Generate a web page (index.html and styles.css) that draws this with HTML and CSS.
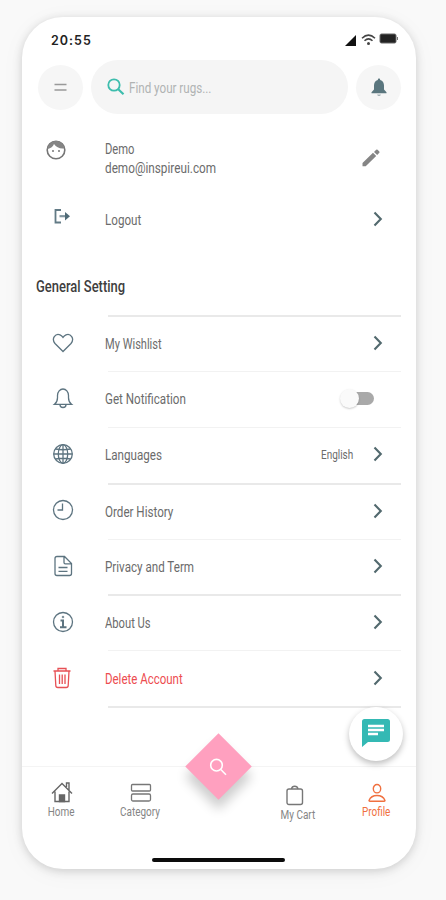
FILE: index.html
```html
<!DOCTYPE html>
<html lang="en">
<head>
<meta charset="utf-8">
<title>Profile</title>
<link rel="stylesheet" href="styles.css">
</head>
<body>
<svg width="0" height="0" class="defs"><symbol id="chev" viewBox="0 0 10 16"><path d="M1.500 1.500 7.800 8 1.500 14.500" fill="none" stroke="#52696e" stroke-width="2.100"/></symbol></svg>
<main class="phone">
  <div class="status">
    <span class="time">20:55</span>
    <svg width="54" height="14" viewBox="0 0 54 14"><path d="M0 13 11 2V13Z" fill="#111"/><g fill="none" stroke="#444" stroke-width="1.500"><path d="M17 5.200Q23.500-1 30 5.200"/><path d="M19.500 7.800Q23.500 4 27.500 7.800"/></g><circle cx="23.500" cy="10.500" r="1.500" fill="#444"/><rect x="35" y="1" width="16" height="9" rx="1.500" fill="#222" stroke="#666"/><path d="M52.500 4v3" stroke="#777"/></svg>
  </div>
  <header class="top">
    <button class="round"><svg width="13" height="9" viewBox="0 0 13 9"><path d="M.5 1.500h12M.5 7h12" stroke="#999" stroke-width="1.600"/></svg></button>
    <div class="search">
      <svg width="18" height="18" viewBox="0 0 18 18" fill="none" stroke="#3dbdad" stroke-width="1.800"><circle cx="7" cy="7" r="5.700"/><path d="m11 11 5.500 5.200" stroke-width="2.200"/></svg>
      <span class="t hint">Find your rugs...</span>
    </div>
    <button class="round"><svg width="16" height="19" viewBox="0 0 16 19" fill="#5a767e"><path d="M8 .5c.9 0 1.200.7 1.200 1.500 2.600.8 3.800 2.900 3.800 5.500v4l2.500 2.700v1H.5v-1L3 11.500v-4C3 4.900 4.200 2.800 6.800 2 6.800 1.200 7.100.5 8 .5z"/><path d="M6 16.500h4L9 18H7z" fill="#a5b2b6"/></svg></button>
  </header>

  <section class="user">
    <svg class="face" width="20" height="20" viewBox="0 0 20 20"><circle cx="10" cy="10" r="8.800" fill="none" stroke="#757575" stroke-width="1.600"/><path d="M1.500 9C5 8.500 7 6.500 8 4c2.500 3.500 6 5 10.500 4.300C17.500 3.500 14 1 10 1S2 4 1.500 9z" fill="#858585"/><circle cx="7" cy="11" r="1" fill="#777"/><circle cx="13" cy="11" r="1" fill="#777"/></svg>
    <div class="who"><span class="t name">Demo</span><span class="t mail">demo@inspireui.com</span></div>
    <svg class="pen" width="18" height="18" viewBox="0 0 18 18" fill="#858585"><path d="M.5 14 11 3.800l3.200 3.200L3.700 17.300H.5zM12 2.900 14.200.7q.7-.6 1.400 0l1.700 1.700q.6.700 0 1.400L15.200 6z"/></svg>
  </section>
  <section class="logout">
    <svg class="out" width="17" height="15" viewBox="0 0 17 15"><path d="M8 1H2.500v12.500H8" fill="none" stroke="#627a85" stroke-width="1.800"/><path d="M6.500 7.200H13" stroke="#8296a0" stroke-width="2.200"/><path d="M12 3 17 7.200 12 11.500z" fill="#506b77"/></svg>
    <span class="t out-label">Logout</span>
    <svg class="chev" width="10" height="16"><use href="#chev"/></svg>
  </section>

  <h2><span class="t heading">General Setting</span></h2>

  <ul class="list">
    <li class="row"><svg class="ico" viewBox="0 0 22 22"><path d="M11 19.500 3 11.500C-1 6.500 3.500 1 8 2.800c1.500.6 2.400 1.500 3 2.500.6-1 1.500-1.900 3-2.500 4.500-1.800 9 3.700 5 8.700z"/></svg><div class="body"><span class="t wish">My Wishlist</span><svg class="chev" width="10" height="16"><use href="#chev"/></svg></div></li>
    <li class="row thin"><svg class="ico" viewBox="0 0 22 22"><path d="M2.500 17.300c2-1.500 3-3.500 3-6.500V8.500C5.500 5 8 2 11 2s5.500 3 5.500 6.500v2.300c0 3 1 5 3 6.500zM8 17.800c0 1.500 1.300 2.700 3 2.700s3-1.200 3-2.700"/></svg><div class="body"><span class="t notif">Get Notification</span><i class="switch"></i></div></li>
    <li class="row thin"><svg class="ico globe" viewBox="0 0 22 22"><circle cx="11" cy="11" r="9.300"/><ellipse cx="11" cy="11" rx="4.700" ry="9.300"/><path d="M11 1.700v18.600M1.700 11h18.600M3.500 6q7.500 1.500 15 0M3.500 16q7.500-1.500 15 0"/></svg><div class="body"><span class="t lang">Languages</span><span class="t english">English</span><svg class="chev" width="10" height="16"><use href="#chev"/></svg></div></li>
    <li class="row"><svg class="ico" viewBox="0 0 22 22"><circle cx="11" cy="11" r="9.500"/><path d="M10.500 4.500V11H5.500"/></svg><div class="body"><span class="t order">Order History</span><svg class="chev" width="10" height="16"><use href="#chev"/></svg></div></li>
    <li class="row thin"><svg class="ico" viewBox="0 0 22 22"><path d="M3 3.500Q3 1.500 5 1.500h7.500L19.500 8.500v10q0 2-2 2H5q-2 0-2-2zM12 1.500V7.500q0 1.300 1.300 1.300h6M6.500 12.500h9M6.500 16.300h9"/></svg><div class="body"><span class="t privacy">Privacy and Term</span><svg class="chev" width="10" height="16"><use href="#chev"/></svg></div></li>
    <li class="row"><svg class="ico" viewBox="0 0 22 22"><circle cx="11" cy="11" r="9.500"/><path d="M8.500 9.500H11V16M8 16.300h6.500" stroke-width="2"/><circle cx="11" cy="6" r=".8" stroke-width="1"/></svg><div class="body"><span class="t about">About Us</span><svg class="chev" width="10" height="16"><use href="#chev"/></svg></div></li>
    <li class="row thin danger"><svg class="ico" viewBox="0 0 22 22"><path d="M1.500 4h17M6 4V1.500h8V4M3 4l.8 14.500q.1 2 2 2h8.400q1.900 0 2-2L17 4M7.500 7.500v9.500M10.200 7.500v9.500M13 7.500v9.500"/></svg><div class="body"><span class="t delete">Delete Account</span><svg class="chev" width="10" height="16"><use href="#chev"/></svg></div></li>
  </ul>

  <nav class="tabs">
    <a class="tab"><svg width="22" height="21" viewBox="0 0 22 21" fill="none" stroke="#666" stroke-width="1.400"><path d="M1 11.500 11 1.500l10 10M4 9.500V19.500h14V9.500M15.500 5V1H18V8"/><path d="M8.500 13h5v6.500h-5z" fill="#666"/></svg><span class="t home">Home</span></a>
    <a class="tab"><svg width="22" height="21" viewBox="0 0 22 21" fill="none" stroke="#777" stroke-width="1.300"><rect x="1.500" y="2.500" width="19" height="6.500" rx="1"/><rect x="1.500" y="12" width="19" height="7" rx="1.500"/></svg><span class="t cat">Category</span></a>
    <a class="tab cart-tab"><svg width="18" height="21" viewBox="0 0 18 21" fill="none" stroke="#777" stroke-width="1.400"><rect x="1" y="4" width="15.500" height="15.500" rx="2"/><path d="M5.500 4Q6 1.300 8.700 1.300T12 4"/></svg><span class="t cart">My Cart</span></a>
    <a class="tab active"><svg width="18" height="21" viewBox="0 0 18 21" fill="none" stroke="#f0703f" stroke-width="1.400"><ellipse cx="9" cy="6.700" rx="3.700" ry="4.200"/><path d="M1 18.500q2-5 8-5t8 5q0 .7-.8.700H1.800q-.8 0-.8-.7z"/></svg><span class="t profile">Profile</span></a>
  </nav>
  <div class="bar"></div>
  <div class="fab"><svg width="20" height="20" viewBox="0 0 20 20" fill="none" stroke="#fff" stroke-width="1.600"><circle cx="8" cy="8" r="5.800"/><path d="m12.300 12.300 5.200 5.200"/></svg></div>
  <div class="chat"><svg width="30" height="30" viewBox="0 0 30 30"><path d="M3.500 1h23q2.500 0 2.500 2.500v18q0 2.500-2.500 2.500H7L1 29V3.500Q1 1 3.500 1z" fill="#34b9b4"/><path d="M7 8h16M7 12h16M7 16h10" stroke="#fff" stroke-width="2.300"/></svg></div>
</main>
</body>
</html>
```
FILE: styles.css
```css
* { box-sizing: border-box; }
body { margin: 0; height: 900px; background: #f9f9f9; font-family: Roboto, "Liberation Sans", sans-serif; overflow: hidden; }
.defs { position: absolute; }
.phone { position: relative; width: 394px; height: 852px; margin: 17px 0 0 22px; background: #fff; border-radius: 41px; box-shadow: 0 2px 10px rgba(0,0,0,.16), 0 4px 26px rgba(0,0,0,.04); }
/* labels are set narrow to imitate a condensed face */
.t { display: block; white-space: nowrap; transform: scaleX(.83); transform-origin: left center; font-size: 14px; line-height: 18px; color: #6b6b6b; }
.status { height: 43px; display: flex; justify-content: space-between; padding: 16px 17px 0 29px; }
.time { font: 600 12.500px/16px Inter, sans-serif; letter-spacing: 1px; color: #222; }
.top { display: flex; align-items: center; gap: 8px; height: 54px; padding: 0 15px 0 16px; }
.round { width: 45px; height: 45px; border: 0; border-radius: 50%; background: #f6f6f6; padding: 0; display: grid; place-items: center; }
.search { flex: 1; height: 54px; border-radius: 27px; background: #f5f5f5; display: flex; align-items: center; padding-left: 16px; gap: 4px; }
.hint { color: #b0b3b3; padding-top: 2px; }
.user { height: 70px; display: flex; align-items: flex-start; padding: 26px 35px 0 24px; }
.who { width: 276px; margin-left: 39px; }
.who .t { line-height: 19px; }
.name { transform: scaleX(.8); }
.mail { transform: scaleX(.84); }
.wish { transform: scaleX(.79); }
.about { transform: scaleX(.8); }
.delete { transform: scaleX(.82); }
.pen { margin: 9px 0 0 -19px; }
.logout { height: 71px; display: flex; align-items: center; padding: 0 33px 0 31px; }
.out { margin-top: -6px; }
.chev { margin-top: -2px; }
.out-label { margin-left: 35px; flex: 1; }
h2 { margin: 0; height: 60px; padding: 21px 0 0 14px; }
.heading { font-weight: 500; font-size: 16px; line-height: 22px; color: #3e3e3e; transform: scaleX(.81); }
.list { list-style: none; margin: 0; padding: 0; }
.row { display: flex; height: 55.900px; }
.ico { width: 22px; height: 22px; margin: 16.500px 0 0 30px; fill: none; stroke: #5d7480; stroke-width: 1.300; }
.danger .ico { stroke: #e75055; }
.danger .t { color: #ed4c50; }
.body { flex: 1; margin: 0 15px 0 34px; padding-right: 18px; border-top: 2px solid #e9e9e9; display: flex; align-items: center; justify-content: space-between; }
.body > .t:first-child { margin-left: -3px; flex: 1; }
.thin .body { border-top: 1px solid #f2f2f2; }
.switch { position: relative; width: 31px; height: 13px; border-radius: 7px; background: #a9a9a9; margin: -1px 9px 0 0; }
.switch::before { content: ""; position: absolute; left: -3px; top: -3px; width: 19px; height: 19px; border-radius: 50%; background: #fafafa; box-shadow: 0 1px 2px rgba(0,0,0,.2); }
.english { font-size: 12px; width: 52px; }
.list::after { content: ""; display: block; height: 2px; background: #e9e9e9; margin: 0 15px 0 86px; }
.tabs { margin-top: 58px; border-top: 1px solid #f4f4f4; display: grid; grid-template-columns: 79px 79px 1fr 79px; height: 84px; padding-top: 15px; }
.tab { display: flex; flex-direction: column; align-items: center; gap: 1px; }
.tab .t { font-size: 12px; line-height: 16px; transform-origin: center; color: #858585; }
.cart-tab { padding: 3px 0 0 78px; }
.cart-tab svg { margin-right: 5px; }
.tab.active .t { color: #f0703f; }
.bar { position: absolute; left: 130px; top: 841px; width: 133px; height: 4px; border-radius: 2px; background: #0c0c0c; }
.fab { position: absolute; left: 173px; top: 726px; width: 47px; height: 47px; background: #ffa0bf; transform: rotate(45deg); box-shadow: 7px 7px 12px rgba(0,0,0,.2); display: grid; place-items: center; }
.fab svg { transform: rotate(-45deg); }
.chat { position: absolute; left: 327px; top: 690px; width: 54px; height: 54px; border-radius: 50%; background: #fff; box-shadow: 0 3px 6px rgba(0,0,0,.26); display: grid; place-items: center; }
.chat svg { margin-top: -3px; }
```
